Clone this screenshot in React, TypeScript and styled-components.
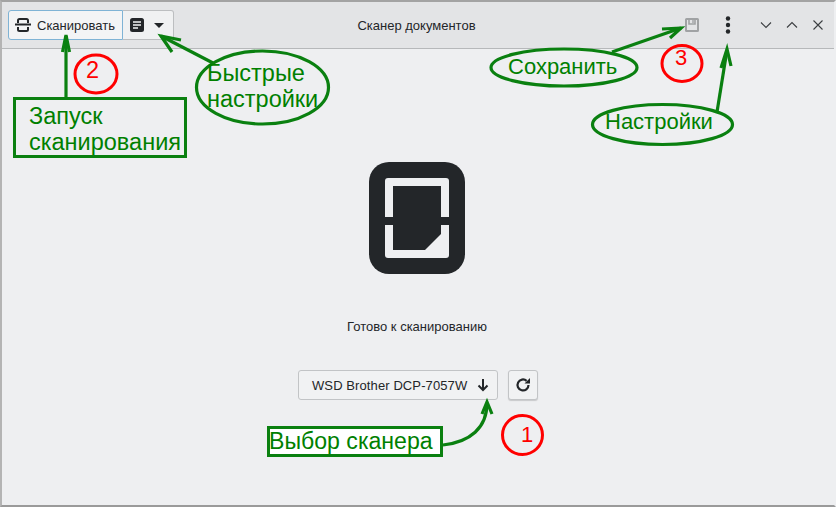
import React from 'react';
import styled, { createGlobalStyle } from 'styled-components';

const Global = createGlobalStyle`
  html, body {
    margin: 0;
    padding: 0;
    background: #eeeff1;
  }
  * {
    box-sizing: border-box;
  }
`;

const Window = styled.div`
  position: relative;
  width: 836px;
  height: 507px;
  overflow: hidden;
  background: #eeeff1;
  border-top: 2px solid #a3a3a3;
  border-left: 2px solid #b4b4b4;
  border-right: 2px solid #eeeff1;
  border-bottom: 2px solid #9a9a9a;
  font-family: 'Liberation Sans', Arial, sans-serif;
  color: #232629;
`;

// sliver of the desktop that shows at the right edge of the shot
const DesktopEdge = styled.div`
  position: absolute;
  top: 138px;
  right: -2px;
  bottom: 0;
  width: 2px;
  background: linear-gradient(#6a8fa5 0, #6a8fa5 50px, #a8a8a8 50px);
`;

const HeaderBar = styled.header`
  height: 47px;
  display: grid;
  grid-template-columns: 1fr auto 1fr;
  align-items: center;
  padding: 0 3px 0 6px;
  background: #e3e4e6;
  border-bottom: 1px solid #b6b8ba;
`;

const LeftTools = styled.div`
  display: flex;
  align-items: center;
`;

const RightTools = styled.div`
  display: flex;
  align-items: center;
  justify-content: flex-end;
`;

const Title = styled.div`
  font-size: 13px;
  margin-left: -6px;
  color: #232629;
`;

const ScanButton = styled.div`
  width: 115px;
  height: 30px;
  display: flex;
  align-items: center;
  gap: 6px;
  padding-left: 6px;
  font-size: 13px;
  background: #f3f4f5;
  border: 1px solid #7fb3d5;
  border-radius: 3px 0 0 3px;
`;

const PresetButton = styled.div`
  width: 51px;
  height: 30px;
  display: flex;
  align-items: center;
  gap: 10px;
  padding-left: 7px;
  background: #f0f1f2;
  border: 1px solid #bcbec0;
  border-left: none;
  border-radius: 0 3px 3px 0;
`;

const IconSlot = styled.div<{ $w: number; $gap?: number }>`
  width: ${(p) => p.$w}px;
  height: 30px;
  margin-left: ${(p) => p.$gap ?? 0}px;
  display: flex;
  align-items: center;
  justify-content: center;
`;

const Content = styled.main`
  height: 456px;
  display: flex;
  flex-direction: column;
  align-items: center;
  padding: 113px 2px 0 0;
`;

const Status = styled.p`
  margin: 45px 0 0;
  font-size: 13px;
  line-height: 16px;
`;

const ScannerRow = styled.div`
  margin-top: 35px;
  display: flex;
  gap: 10px;
  transform: translateX(1px);
`;

const ScannerSelect = styled.div`
  width: 200px;
  height: 30px;
  display: flex;
  align-items: center;
  justify-content: space-between;
  padding: 0 8px 0 13px;
  font-size: 13px;
  letter-spacing: 0.1px;
  background: #f1f2f3;
  border: 1px solid #c2c4c6;
  border-radius: 3px;
`;

const RefreshButton = styled.div`
  width: 30px;
  height: 30px;
  display: flex;
  align-items: center;
  justify-content: center;
  background: #f1f2f3;
  border: 1px solid #c2c4c6;
  border-radius: 3px;
  box-shadow: 0 1px 1px #c8c9cb;
`;

// screenshot annotations, drawn over the window
const Overlay = styled.svg`
  position: absolute;
  left: -2px;
  top: -2px;
  pointer-events: none;
`;

const Note = styled.div<{ $x: number; $y: number; $size?: number; $color?: string }>`
  position: absolute;
  left: ${(p) => p.$x - 2}px;
  top: ${(p) => p.$y - 2}px;
  font-size: ${(p) => p.$size ?? 22}px;
  line-height: 26px;
  color: ${(p) => p.$color ?? '#008000'};
  white-space: pre;
`;

const StartNote = styled(Note)`
  width: 174px;
  height: 61px;
  border: 3px solid #0a8010;
  padding: 3px 0 0 13px;
`;

const ScannerNote = styled(Note)`
  width: 176px;
  height: 31px;
  line-height: 25px;
  text-indent: -1px;
  background: #fff;
  border: 3px solid #0a8010;
`;

function ScanIcon() {
  return (
    <svg width="16" height="14" viewBox="0 0 16 14" fill="none" stroke="#232629" strokeWidth="2">
      <path d="M3 5V2.5Q3 1 4.5 1H11.5Q13 1 13 2.5V5" />
      <path d="M3 9V11.5Q3 13 4.5 13H11.5Q13 13 13 11.5V9" />
      <path d="M0 6.5H16" />
    </svg>
  );
}

function PresetIcon() {
  return (
    <svg width="14" height="14" viewBox="0 0 14 14">
      <rect width="14" height="14" rx="2.5" fill="#232629" />
      <path d="M3 4H11M3 7H11M3 10H8" stroke="#f2f3f4" strokeWidth="1.3" />
    </svg>
  );
}

function SaveIcon() {
  return (
    <svg width="14" height="14" viewBox="0 0 14 14" fill="none" stroke="#a0a2a4" strokeWidth="2">
      <rect x="1" y="1" width="12" height="12" rx="0.5" />
      <path d="M4 1V6H10V1" strokeWidth="1.6" />
      <path d="M8 2V5" strokeWidth="1.4" />
    </svg>
  );
}

function DotsIcon() {
  return (
    <svg width="6" height="18" viewBox="0 0 6 18" fill="#232629">
      <circle cx="3" cy="2.5" r="2.2" />
      <circle cx="3" cy="9" r="2.2" />
      <circle cx="3" cy="15.5" r="2.2" />
    </svg>
  );
}

function ChromeIcon({ d }: { d: string }) {
  return (
    <svg width="12" height="12" viewBox="0 0 12 12" fill="none" stroke="#3b3e41" strokeWidth="1.1">
      <path d={d} />
    </svg>
  );
}

function AppIcon() {
  return (
    <svg width="96" height="112" viewBox="0 0 96 112">
      <rect width="96" height="112" rx="20" fill="#232629" />
      <rect x="16" y="16" width="64" height="80" rx="3" fill="#eeeff1" />
      <rect x="16" y="55" width="64" height="8" fill="#232629" />
      <path d="M24 24H72V72L56 88H24Z" fill="#232629" />
    </svg>
  );
}

function Annotations() {
  const green = '#0a8010';
  return (
    <Overlay width="836" height="507" viewBox="0 0 836 507" fill="none">
      <g stroke={green} strokeWidth="3.2">
        <path d="M66 97V36" />
        <path d="M62.5 52L66 35L69.5 52" />
        <path d="M213 63L161 36" />
        <path d="M181 40L161 36L172 52" />
        <path d="M612 52L681 28" />
        <path d="M662 29L681 28L670 38" />
        <path d="M717 112L727 50" />
        <path d="M721 68L727 49L731 66" />
        <path d="M443 445C470 442 487 428 487 403" />
        <path d="M482 414L487 402L492 414" />
        <ellipse cx="262.5" cy="87.5" rx="66" ry="36.5" />
        <ellipse cx="564" cy="67.5" rx="73" ry="18.5" />
        <ellipse cx="662.5" cy="124.5" rx="70" ry="20" />
      </g>
      <g stroke="#ff0000" strokeWidth="3">
        <ellipse cx="96" cy="74" rx="21" ry="19" />
        <ellipse cx="682" cy="63.5" rx="20" ry="18" />
        <ellipse cx="522.5" cy="435" rx="20" ry="19.5" />
      </g>
    </Overlay>
  );
}

export default function App() {
  return (
    <>
      <Global />
      <Window>
        <HeaderBar>
          <LeftTools>
            <ScanButton>
              <ScanIcon />
              Сканировать
            </ScanButton>
            <PresetButton>
              <PresetIcon />
              <svg width="10" height="5" viewBox="0 0 10 5">
                <path d="M0 0H10L5 5Z" fill="#232629" />
              </svg>
            </PresetButton>
          </LeftTools>
          <Title>Сканер документов</Title>
          <RightTools>
            <IconSlot $w={30}>
              <SaveIcon />
            </IconSlot>
            <IconSlot $w={42}>
              <DotsIcon />
            </IconSlot>
            <IconSlot $w={26} $gap={4}>
              <ChromeIcon d="M1 3.5L6 8.5L11 3.5" />
            </IconSlot>
            <IconSlot $w={26}>
              <ChromeIcon d="M1 8.5L6 3.5L11 8.5" />
            </IconSlot>
            <IconSlot $w={26}>
              <ChromeIcon d="M1.5 1.5L10.5 10.5M10.5 1.5L1.5 10.5" />
            </IconSlot>
          </RightTools>
        </HeaderBar>
        <Content>
          <AppIcon />
          <Status>Готово к сканированию</Status>
          <ScannerRow>
            <ScannerSelect>
              WSD Brother DCP-7057W
              <svg width="12" height="14" viewBox="0 0 12 14" fill="none" stroke="#232629" strokeWidth="2">
                <path d="M6 1V12M1.5 7.5L6 12L10.5 7.5" />
              </svg>
            </ScannerSelect>
            <RefreshButton>
              <svg width="16" height="16" viewBox="0 0 16 16" fill="none" stroke="#232629" strokeWidth="2.2">
                <path d="M13.5 8A5.5 5.5 0 1 1 11.6 3.8" />
                <path d="M15 1V6.5H9.5Z" fill="#232629" stroke="none" />
              </svg>
            </RefreshButton>
          </ScannerRow>
        </Content>
        <DesktopEdge />
        <Annotations />
        <Note $x={207} $y={60} $size={23.5}>Быстрые{'\n'}настройки</Note>
        <Note $x={508} $y={54}>Сохранить</Note>
        <Note $x={605} $y={109}>Настройки</Note>
        <Note $x={86} $y={57} $size={23.5} $color="#ff0000">2</Note>
        <Note $x={675} $y={45} $color="#ff0000">3</Note>
        <Note $x={521} $y={422} $color="#ff0000">1</Note>
        <StartNote $x={13} $y={97} $size={23.5}>Запуск{'\n'}сканирования</StartNote>
        <ScannerNote $x={267} $y={426} $size={23.1}>Выбор сканера</ScannerNote>
      </Window>
    </>
  );
}
